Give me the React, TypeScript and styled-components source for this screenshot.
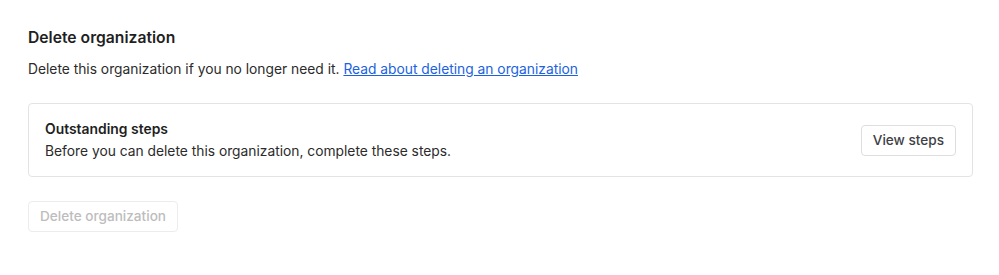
import React from 'react'
import styled, { createGlobalStyle } from 'styled-components'

const GlobalStyle = createGlobalStyle`
  body {
    margin: 0;
    background: #ffffff;
    font-family: Inter, "Noto Sans", sans-serif;
    color: #1f1f1f;
  }
`

export default function App() {
  return (
    <>
      <GlobalStyle />
      <Section>
        <Title>Delete organization</Title>
        <Description>
          Delete this organization if you no longer need it.{' '}
          <Link href="#">Read about deleting an organization</Link>
        </Description>
        <StepsCard>
          <StepsText>
            <StepsTitle>Outstanding steps</StepsTitle>
            <StepsBody>Before you can delete this organization, complete these steps.</StepsBody>
          </StepsText>
          <Button>View steps</Button>
        </StepsCard>
        <Actions>
          <Button disabled>Delete organization</Button>
        </Actions>
      </Section>
    </>
  )
}

const Section = styled.section`
  display: flex;
  flex-direction: column;
  align-items: stretch;
  padding: 28px 26px 28px 28px;
`

const Title = styled.h2`
  margin: 0;
  font-size: 15.7px;
  line-height: 20px;
  font-weight: 600;
  color: #1f1f1f;
`

const Description = styled.p`
  margin: 11px 0 0;
  font-size: 13.8px;
  line-height: 20px;
  color: #2b2b2b;
`

const Link = styled.a`
  color: #1a62e0;
  text-decoration: underline;
`

const StepsCard = styled.div`
  display: flex;
  flex-direction: row;
  align-items: center;
  justify-content: space-between;
  margin-top: 24px;
  padding: 15px 16px;
  border: 1px solid #e3e3e3;
  border-radius: 4px;
`

const StepsText = styled.div`
  display: flex;
  flex-direction: column;
  gap: 2px;
`

const StepsTitle = styled.div`
  font-size: 13.9px;
  line-height: 20px;
  font-weight: 600;
  color: #1f1f1f;
`

const StepsBody = styled.div`
  font-size: 13.8px;
  line-height: 20px;
  color: #2b2b2b;
`

const Actions = styled.div`
  display: flex;
  margin-top: 24px;
`

const Button = styled.button`
  font-family: inherit;
  font-size: 13.6px;
  line-height: 19px;
  font-weight: 500;
  padding: 5px 11px;
  background: #ffffff;
  color: #3f3f46;
  border: 1px solid #dedede;
  border-radius: 4px;
  cursor: pointer;

  &:disabled {
    color: #bdbdbd;
    border-color: #ececec;
    cursor: default;
  }
`
